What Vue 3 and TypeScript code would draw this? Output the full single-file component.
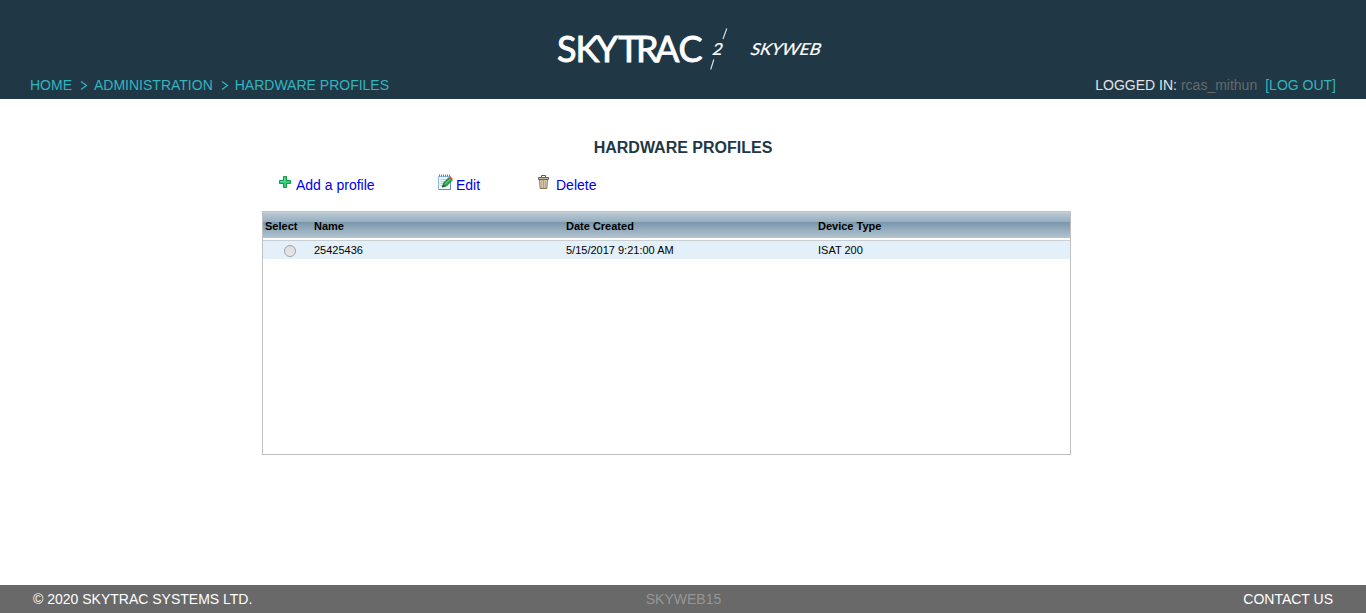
<script setup lang="ts">
interface Profile {
  id: number
  name: string
  created: string
  device: string
}

const trail: string[] = ['HOME', 'ADMINISTRATION', 'HARDWARE PROFILES']
const profiles: Profile[] = [
  { id: 1, name: '25425436', created: '5/15/2017 9:21:00 AM', device: 'ISAT 200' },
]
</script>

<template>
  <div class="page">
    <header class="top">
      <svg class="logo" width="270" height="46" viewBox="0 0 270 46">
        <text class="brand" y="36.3" x="0 18.5 38.8 61.2 79.1 98 121.4">SKYTRAC</text>
        <path d="M169.8 2.5 166 13M156.8 33.5 153.7 43.5" fill="none" stroke="#dfe5e8" stroke-width="1.1" />
        <text class="two" transform="translate(154.6 29) skewX(-14)" textLength="10" lengthAdjust="spacingAndGlyphs">2</text>
        <text class="product" transform="translate(192.4 29) skewX(-19)" textLength="69.8" lengthAdjust="spacingAndGlyphs">SKYWEB</text>
      </svg>
      <div class="bar">
        <nav class="trail">
          <template v-for="(item, i) in trail" :key="item">
            <svg v-if="i > 0" class="sep" width="8" height="16" viewBox="0 0 8 16">
              <path d="M1 4.5 6.5 8.5 1 12.5" fill="none" stroke="currentColor" stroke-width="1.2" />
            </svg>
            <a>{{ item }}</a>
          </template>
        </nav>
        <div class="user">
          <span>LOGGED IN:</span>
          <span class="login">rcas_mithun</span>
          <a class="logout">[LOG OUT]</a>
        </div>
      </div>
    </header>

    <main class="main">
      <h1>HARDWARE PROFILES</h1>
      <div class="tools">
        <a class="tool add">
          <svg class="icon" width="12" height="12" viewBox="0 0 12 12">
            <path d="M4.5.5h3v4h4v3h-4v4h-3v-4h-4v-3h4z" fill="#2fd07a" stroke="#12984a" />
            <path d="M5.5 1.5v4h-4" fill="none" stroke="#5fdc95" />
          </svg>
          <span>Add a profile</span>
        </a>
        <a class="tool edit">
          <svg class="icon" width="15" height="16" viewBox="0 0 15 16">
            <path d="M.5 2.5h12v13H.5z" fill="#eef7ff" stroke="#8fb8da" />
            <path d="M.5 15.5h12v-6" fill="none" stroke="#5f90bd" />
            <path d="M1 1.5h12" stroke="#777" stroke-width="2" stroke-dasharray="1 1" />
            <path d="M2.5 5.5h7M2.5 7.5h5M2.5 9.5h3M2.5 11.5h2" stroke="#b7d0e5" />
            <path d="m4.5 13 1-4L11 3.5 14 6.5 8.5 12z" fill="#26a64a" stroke="#166b2d" stroke-width=".8" />
            <path d="m7 10.3 5-5" stroke="#75df7d" />
            <path d="M10.8 3.8 12.3 2.3 15 4.9 13.5 6.5z" fill="#d45840" />
            <path d="m4.2 13.3.8-2.6 1.8 1.8z" fill="#2b3d2b" />
          </svg>
          <span>Edit</span>
        </a>
        <a class="tool del">
          <svg class="icon" width="11" height="14" viewBox="0 0 11 14">
            <path d="M3.5 2V.5h4V2" fill="none" stroke="#665842" />
            <path d="M1.5 4.5h8l-.7 9H2.2z" fill="#e2d6bd" stroke="#85765a" />
            <path d="M3.8 5v8M5.5 5v8M7.2 5v8" stroke="#a09172" stroke-width=".8" />
            <path d="M.5 2.5h10v2H.5z" fill="#c8baa0" stroke="#6d5f49" />
          </svg>
          <span>Delete</span>
        </a>
      </div>

      <section class="grid">
        <div class="row head">
          <span>Select</span><span>Name</span><span>Date Created</span><span>Device Type</span>
        </div>
        <div v-for="p in profiles" :key="p.id" class="row item">
          <span class="pick"><i class="radio"></i></span>
          <span>{{ p.name }}</span><span>{{ p.created }}</span><span>{{ p.device }}</span>
        </div>
      </section>
    </main>

    <footer class="foot">
      <span>© 2020 SKYTRAC SYSTEMS LTD.</span>
      <span class="server">SKYWEB15</span>
      <span class="contact">CONTACT US</span>
    </footer>
  </div>
</template>

<style>
body {
  margin: 0;
  overflow: hidden;
}
</style>

<style scoped>
.page {
  display: flex;
  flex-direction: column;
  height: 613px;
  box-sizing: border-box;
  background: #fff;
  font: 14px/16px "Liberation Sans", Arial, sans-serif;
}
.top {
  height: 99px;
  flex: none;
  background: #203846;
  color: #33b4bf;
}
.logo {
  display: block;
  margin: 26px 0 0 557px;
  overflow: visible;
}
.brand {
  font: 36px Lato, sans-serif;
  fill: #fff;
  stroke: #fff;
  stroke-width: 0.9px;
}
.two,
.product {
  font: 16.5px Lato, sans-serif;
  fill: #fff;
  stroke: #fff;
  stroke-width: 0.2px;
}
.bar {
  display: flex;
  justify-content: space-between;
  padding: 5px 30px 0;
}
.trail {
  display: flex;
}
.sep {
  margin: 0 6px 0 8px;
}
.user {
  display: flex;
  color: #e4e4e4;
}
.login {
  margin: 0 8px 0 4px;
  color: #686868;
}
.logout {
  color: #33b4bf;
}
.main {
  flex: 1;
}
h1 {
  margin: 40px 0 0;
  font-size: 16px;
  line-height: 18px;
  text-align: center;
  color: #203846;
}
.tools {
  display: flex;
  height: 18px;
  margin: 18px 0 18px 279px;
  color: #0000ee;
}
.tool {
  display: flex;
  align-items: flex-start;
}
.tool span {
  margin-top: 2px;
}
.add {
  width: 159px;
  gap: 5px;
}
.edit {
  width: 100px;
  gap: 3px;
}
.del {
  gap: 7px;
}
.add .icon {
  margin-top: 1px;
}
.edit .icon {
  margin-top: -1px;
}
.grid {
  box-sizing: border-box;
  width: 809px;
  height: 244px;
  margin-left: 262px;
  border: 1px solid #c0c0c0;
  font-size: 11px;
  color: #000;
}
.row {
  display: grid;
  grid-template-columns: 51px 252px 252px 1fr;
  align-items: center;
}
.head {
  height: 26px;
  padding-top: 2px;
  box-sizing: border-box;
  font-weight: bold;
  background: linear-gradient(#d5dde2 0, #b6c6d1 1px, #98afbf 10px, #7897ac 10px, #b3c4cf 26px);
}
.head span:first-child {
  padding-left: 2px;
}
.item {
  height: 18px;
  margin-top: 2px;
  border-top: 1px solid #c9cfd3;
  background: #e3f0fa;
}
.pick {
  display: flex;
  padding: 2px 0 0 21px;
}
.radio {
  width: 10px;
  height: 10px;
  border: 1px solid #a2a2a2;
  border-radius: 50%;
  background: linear-gradient(#dedede, #e9e9e9);
}
.foot {
  display: grid;
  grid-template-columns: 1fr auto 1fr;
  height: 28px;
  flex: none;
  box-sizing: border-box;
  padding: 6px 33px 0;
  background: #696969;
  color: #fff;
}
.server {
  padding-left: 1px;
  color: #969696;
}
.contact {
  text-align: right;
}
</style>
